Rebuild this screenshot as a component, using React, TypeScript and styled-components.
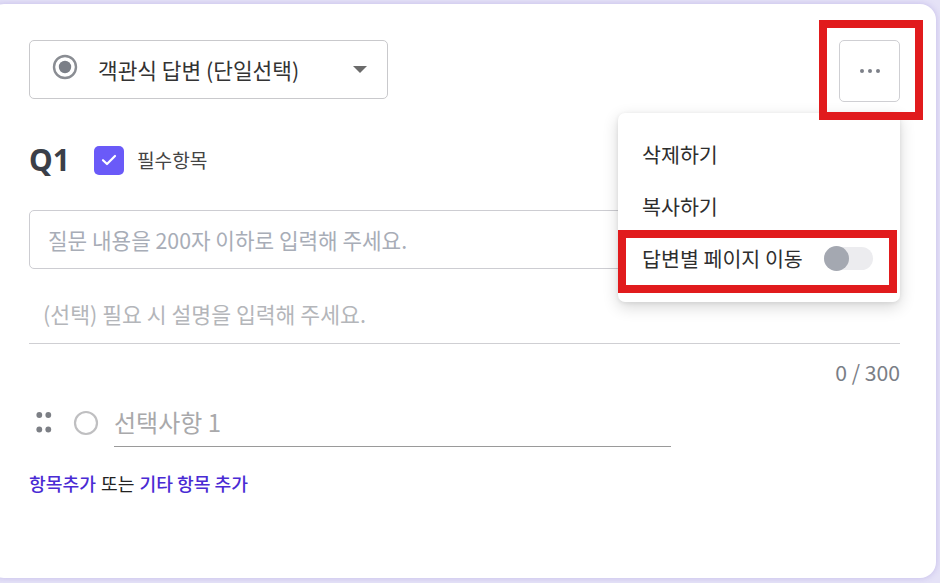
import React from "react";
import styled, { createGlobalStyle } from "styled-components";

const GlobalStyle = createGlobalStyle`
  html, body {
    margin: 0;
    padding: 0;
    background: #e5e2f7;
    overflow: hidden;
  }
  body {
    font-family: "Noto Sans CJK KR", "Noto Sans", sans-serif;
    color: #333;
  }
  * { box-sizing: border-box; }
`;

const Page = styled.div`
  width: 940px;
  height: 583px;
  padding: 4px 4px 5px 0;
  overflow: hidden;
`;

const Card = styled.div`
  margin-left: -12px;
  height: 574px;
  background: #fff;
  border-radius: 16px;
  box-shadow: 0 0 6px rgba(110, 90, 200, 0.28);
  padding: 36px 36px 0 41px;
  display: flex;
  flex-direction: column;
`;

const Header = styled.div`
  display: flex;
  justify-content: space-between;
  align-items: flex-start;
`;

const TypeSelect = styled.div`
  width: 359px;
  height: 59px;
  border: 1px solid #c9c9cc;
  border-radius: 5px;
  display: flex;
  align-items: center;
  padding: 0 20px 0 22px;
`;

const TypeLabel = styled.span`
  flex: 1;
  margin-left: 20px;
  font-size: 21.4px;
  color: #333;
  line-height: 1;
`;

const Caret = styled.span`
  width: 0;
  height: 0;
  border-left: 7px solid transparent;
  border-right: 7px solid transparent;
  border-top: 7px solid #6b6b6b;
`;

const MoreWrap = styled.div`
  position: relative;
`;

const MoreButton = styled.button`
  width: 61px;
  height: 62px;
  border: 1px solid #cfcfd3;
  border-radius: 5px;
  background: #fff;
  display: flex;
  align-items: center;
  justify-content: center;
  gap: 4px;
  padding: 0;
`;

const Dot = styled.span`
  width: 4px;
  height: 4px;
  border-radius: 50%;
  background: #7d8088;
`;

const Highlight = styled.div<{ $t: number; $r: number; $b: number; $l: number }>`
  position: absolute;
  top: ${(p) => p.$t}px;
  right: ${(p) => p.$r}px;
  bottom: ${(p) => p.$b}px;
  left: ${(p) => p.$l}px;
  border: 8px solid #e11b1d;
  pointer-events: none;
  z-index: 3;
`;

const Menu = styled.div`
  position: absolute;
  top: calc(100% + 11px);
  right: 0;
  width: 282px;
  background: #fff;
  border-radius: 7px;
  box-shadow: 0 5px 16px rgba(0, 0, 0, 0.16), 0 1px 4px rgba(0, 0, 0, 0.08);
  padding: 15px 0 18px;
  z-index: 2;
`;

const MenuItem = styled.div`
  position: relative;
  height: 52px;
  display: flex;
  align-items: center;
  padding-left: 24px;
  font-size: 20.6px;
  color: #2e2e2e;
`;

const Toggle = styled.span`
  margin-left: 21px;
  width: 49px;
  height: 23px;
  border-radius: 12px;
  background: #ececef;
  position: relative;
  display: inline-block;
`;

const Knob = styled.span`
  position: absolute;
  left: 0;
  top: -1px;
  width: 25px;
  height: 25px;
  border-radius: 50%;
  background: #a4a8b1;
`;

const QuestionRow = styled.div`
  margin-top: 43px;
  display: flex;
  align-items: center;
  height: 30px;
`;

const QNumber = styled.span`
  font-size: 30px;
  font-weight: 700;
  color: #3b3f48;
  line-height: 1;
  font-family: "Noto Sans", "Noto Sans CJK KR", sans-serif;
`;

const Check = styled.span`
  margin-left: 24px;
  width: 30px;
  height: 29px;
  border-radius: 5px;
  background: #6a5af8;
  display: flex;
  align-items: center;
  justify-content: center;
`;

const RequiredLabel = styled.span`
  margin-left: 13px;
  font-size: 19.2px;
  color: #444;
`;

const QuestionInput = styled.div`
  margin-top: 35px;
  height: 59px;
  border: 1px solid #cdcdd2;
  border-radius: 5px;
  display: flex;
  align-items: center;
  padding-left: 18px;
  font-size: 21.3px;
  color: #a8adb7;
`;

const Description = styled.div`
  margin-top: 16px;
  height: 59px;
  border-bottom: 1px solid #cfcfd3;
  display: flex;
  align-items: center;
  padding-left: 14px;
  padding-bottom: 2px;
  font-size: 21.6px;
  color: #b4b6ba;
`;

const Counter = styled.div`
  margin-top: 14px;
  height: 28px;
  line-height: 28px;
  text-align: right;
  font-size: 21.2px;
  color: #7a7e86;
`;

const OptionRow = styled.div`
  margin-top: 17px;
  display: flex;
  align-items: flex-end;
  height: 44px;
`;

const OptionIcons = styled.div`
  display: flex;
  align-items: center;
  height: 44px;
  padding-bottom: 5px;
`;

const OptionText = styled.div`
  margin-left: 15px;
  width: 557px;
  height: 44px;
  border-bottom: 1px solid #9a9a9a;
  display: flex;
  align-items: center;
  padding-bottom: 6px;
  font-size: 24px;
  color: #a9a9ab;
`;

const Links = styled.div`
  margin-top: 23px;
  font-size: 18.2px;
  color: #222;
  display: flex;
  gap: 5px;
`;

const LinkText = styled.span`
  color: #4a2bd4;
  font-weight: 500;
`;

function RadioChecked() {
  return (
    <svg width="26" height="26" viewBox="0 0 26 26" style={{ marginTop: -5 }}>
      <circle cx="13" cy="13" r="11" fill="none" stroke="#8a8d93" strokeWidth="2.4" />
      <circle cx="13" cy="13" r="6.2" fill="#7b7f87" />
    </svg>
  );
}

function DragHandle() {
  return (
    <svg width="16" height="21" viewBox="0 0 16 21" style={{ marginLeft: 7 }}>
      <circle cx="3.3" cy="3" r="2.9" fill="#7c7f85" />
      <circle cx="12.3" cy="3" r="2.9" fill="#7c7f85" />
      <circle cx="3.3" cy="17.5" r="2.9" fill="#7c7f85" />
      <circle cx="12.3" cy="17.5" r="2.9" fill="#7c7f85" />
    </svg>
  );
}

function RadioEmpty() {
  return (
    <svg width="26" height="26" viewBox="0 0 26 26" style={{ marginLeft: 21 }}>
      <circle cx="13" cy="13" r="11" fill="none" stroke="#bfbfc1" strokeWidth="2.2" />
    </svg>
  );
}

export default function App() {
  return (
    <>
      <GlobalStyle />
      <Page>
        <Card>
          <Header>
            <TypeSelect>
              <RadioChecked />
              <TypeLabel>객관식 답변 (단일선택)</TypeLabel>
              <Caret />
            </TypeSelect>
            <MoreWrap>
              <MoreButton aria-label="더보기">
                <Dot />
                <Dot />
                <Dot />
              </MoreButton>
              <Highlight $t={-20} $r={-23} $b={-18} $l={-20} />
              <Menu>
                <MenuItem>삭제하기</MenuItem>
                <MenuItem>복사하기</MenuItem>
                <MenuItem>
                  답변별 페이지 이동
                  <Toggle>
                    <Knob />
                  </Toggle>
                  <Highlight $t={-2} $r={3} $b={-9} $l={0} />
                </MenuItem>
              </Menu>
            </MoreWrap>
          </Header>

          <QuestionRow>
            <QNumber>Q1</QNumber>
            <Check>
              <svg width="16" height="12" viewBox="0 0 16 12">
                <path d="M2 6.2 L6 10 L14 2" fill="none" stroke="#fff" strokeWidth="2.2" strokeLinecap="round" strokeLinejoin="round" />
              </svg>
            </Check>
            <RequiredLabel>필수항목</RequiredLabel>
          </QuestionRow>

          <QuestionInput>질문 내용을 200자 이하로 입력해 주세요.</QuestionInput>
          <Description>(선택) 필요 시 설명을 입력해 주세요.</Description>
          <Counter>0 / 300</Counter>

          <OptionRow>
            <OptionIcons>
              <DragHandle />
              <RadioEmpty />
            </OptionIcons>
            <OptionText>선택사항 1</OptionText>
          </OptionRow>

          <Links>
            <LinkText>항목추가</LinkText>
            <span>또는</span>
            <LinkText>기타 항목 추가</LinkText>
          </Links>
        </Card>
      </Page>
    </>
  );
}
